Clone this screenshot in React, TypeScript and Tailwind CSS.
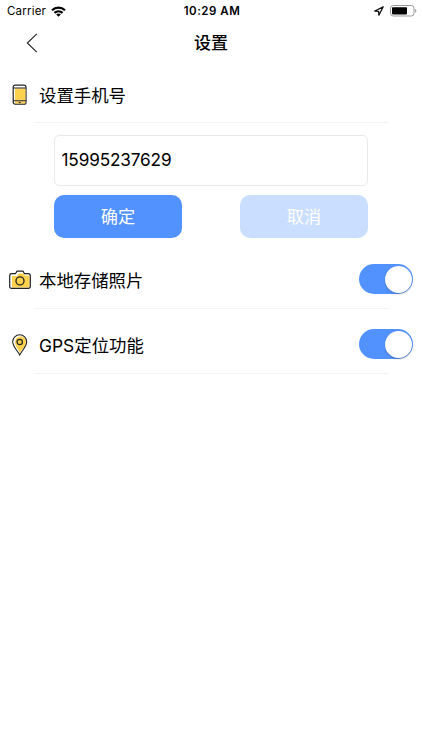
import type { ReactNode } from "react";

function WifiIcon() {
  return (
    <svg width="15" height="11" viewBox="0 0 15 11" fill="none" stroke="#000" strokeWidth="2.2">
      <path d="M1 4.2C4.7 .7 10.3 .7 14 4.2" />
      <path d="M3.4 6.9c2.4-2.2 5.8-2.2 8.2 0" />
      <path d="M7.5 10.7 5.2 8.5c1.3-1.2 3.3-1.2 4.6 0z" fill="#000" stroke="none" />
    </svg>
  );
}

function StatusBar() {
  return (
    <div className="grid h-[22px] grid-cols-3 items-center pl-[7px] pr-[5px] text-[11.5px] leading-[22px]">
      <div className="flex items-center gap-[5px]">
        <span className="tracking-[0.2px]">Carrier</span>
        <WifiIcon />
      </div>
      <div className="whitespace-nowrap text-center font-semibold tracking-[0.5px]">10:29 AM</div>
      <div className="flex items-center justify-end gap-[6px]">
        <svg width="10" height="10" viewBox="0 0 10 10" fill="none" stroke="#111" strokeWidth="1.3" strokeLinejoin="round">
          <path d="M9.200 .8.800 5l3.800.4.300 3.800z" />
        </svg>
        <svg width="27" height="12" viewBox="0 0 27 12">
          <rect x=".5" y=".5" width="23.500" height="10.500" rx="2.800" fill="none" stroke="#999" />
          <rect x="2" y="2.200" width="15" height="7.200" rx=".8" fill="#000" />
          <path d="M25.200 3.800c1.600.6 1.600 3.400 0 4z" fill="#999" />
        </svg>
      </div>
    </div>
  );
}

function PhoneIcon() {
  return (
    <svg width="16" height="22" viewBox="0 0 16 22">
      <rect x="1.200" y="1.200" width="12.800" height="19" rx="2" fill="#fff" stroke="#222" strokeWidth="1.200" />
      <path d="M3 4.400h10.400v11.800H3zM3 17.300h10.400v2.300H3z" fill="#ffd24d" />
      <path d="M1.200 4H14M1.200 16.700H14" stroke="#222" strokeWidth="1.100" />
      <path d="M6.800 18.500h1.800" stroke="#222" strokeWidth="1.100" />
    </svg>
  );
}

function CameraIcon() {
  return (
    <svg width="22" height="20" viewBox="0 0 22 20">
      <path d="M3 6h5l1.500-2.500h5L16 5.500h4.500v12H3z" fill="#ffd24d" />
      <path d="M2.500 3.700h4L8 1.200h6l1.500 2.500h4a1.800 1.800 0 0 1 1.800 1.800v11a1.800 1.800 0 0 1-1.800 1.800h-17A1.800 1.800 0 0 1 .7 16.500v-11a1.800 1.800 0 0 1 1.800-1.800z" fill="none" stroke="#222" strokeWidth="1.200" />
      <circle cx="11" cy="10.900" r="4" fill="#ffd24d" stroke="#222" strokeWidth="1.300" />
    </svg>
  );
}

function PinIcon() {
  return (
    <svg width="16" height="22" viewBox="0 0 16 22">
      <path d="M8 19C6.500 15.500 3 12 3 8a6 6 0 0 1 5-5.500c3.500 0 6 2 6 5.500 0 4-4.500 7.500-6 11z" fill="#ffd24d" />
      <path d="M7.700 21C5.700 17 .7 12.500 .7 7.800a7 7 0 0 1 14 0C14.700 12.500 9.700 17 7.700 21z" fill="none" stroke="#222" strokeWidth="1.100" />
      <circle cx="7.700" cy="8" r="2.700" fill="#ffd24d" stroke="#222" strokeWidth="1.200" />
    </svg>
  );
}

function Toggle() {
  return (
    <button role="switch" aria-checked="true" className="flex h-[30px] w-[54px] items-center justify-end rounded-full bg-[#5292fe] pr-[1px]">
      <span className="size-[27px] rounded-full bg-white shadow-[0_1px_2px_rgba(0,0,0,0.25)]" />
    </button>
  );
}

function Row({ icon, label, children }: { icon: ReactNode; label: string; children?: ReactNode }) {
  return (
    <div className="flex h-[30px] items-center pl-[8px] pr-[9px]">
      <span className="flex w-[23px] justify-center pt-[2px]">{icon}</span>
      <span className="ml-[8px] flex-1 pt-[3px] text-[17.4px] leading-[30px]">{label}</span>
      {children}
    </div>
  );
}

function Divider() {
  return <div className="ml-[34px] mr-[33px] h-px bg-[#f4f4f4]" />;
}

export default function App() {
  return (
    <div className="h-[750px] w-[422px] overflow-hidden bg-white font-[Inter,'Noto_Sans_CJK_SC',sans-serif] text-black">
      <StatusBar />
      <header className="grid h-[43px] grid-cols-[60px_1fr_60px] items-center pb-[2px]">
        <button aria-label="返回" className="pl-[26px]">
          <svg width="12" height="20" viewBox="0 0 12 20" fill="none" stroke="#222" strokeWidth="1.1">
            <path d="M10.800 .8 1.300 10l9.500 9.200" />
          </svg>
        </button>
        <h1 className="text-center text-[17px] font-medium leading-[24px]">设置</h1>
      </header>

      <section className="pt-[14px]">
        <Row icon={<PhoneIcon />} label="设置手机号" />
        <div className="h-[13px]" />
        <Divider />
        <div className="mx-[54px] mt-[12px]">
          <input
            readOnly
            value="15995237629"
            className="block h-[51px] w-full rounded-[5px] border border-[#e9e9e9] px-[6.5px] pb-[2px] text-[17.2px] tracking-[-0.15px] outline-none"
          />
          <div className="mt-[9px] flex justify-between text-[17.2px] text-white">
            <button className="h-[43px] w-[128px] rounded-[10px] bg-[#5292fe] pt-px">确定</button>
            <button className="h-[43px] w-[128px] rounded-[10px] bg-[#cadeff] pt-px">取消</button>
          </div>
        </div>
      </section>

      <section className="pt-[26px]">
        <Row icon={<CameraIcon />} label="本地存储照片">
          <Toggle />
        </Row>
        <div className="h-[14px]" />
        <Divider />
      </section>

      <section className="pt-[20px]">
        <Row icon={<PinIcon />} label="GPS定位功能">
          <Toggle />
        </Row>
        <div className="h-[14px]" />
        <Divider />
      </section>
    </div>
  );
}
